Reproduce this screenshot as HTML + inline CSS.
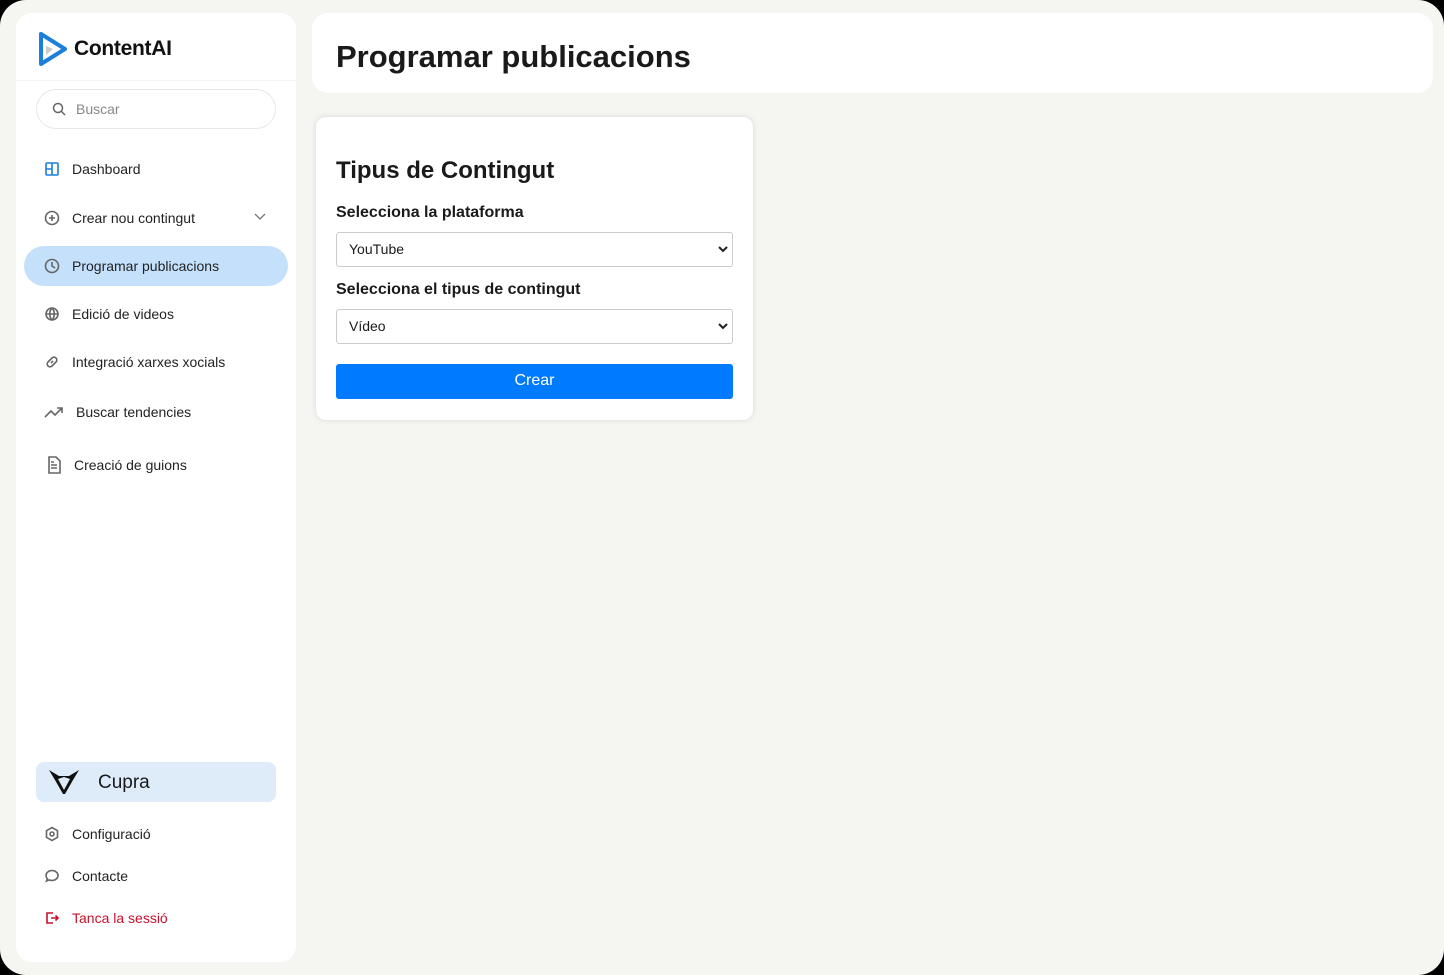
<!DOCTYPE html>
<html><head><meta charset="utf-8"><style>
*{box-sizing:border-box;margin:0;padding:0}
html,body{width:1444px;height:975px;background:#000;overflow:hidden}
body{font-family:"Liberation Sans",sans-serif;color:#1a1a1a}
.app{position:absolute;inset:0;background:#f5f5f1;border-radius:26px}
.side{position:absolute;left:16px;top:13px;width:280px;height:949px;background:#fff;border-radius:16px}
.logo{position:absolute;left:22px;top:19px;display:flex;align-items:center;gap:6px;font-size:21px;font-weight:bold;letter-spacing:-0.3px;color:#111}
.sep{position:absolute;left:0;right:0;top:67px;border-top:1px solid #f3f3f3}
.search{position:absolute;left:20px;top:76px;width:240px;height:40px;border:1px solid #e8e8e8;border-radius:20px;font-size:14px;color:#888;padding:11px 0 0 39px}
.search svg{position:absolute;left:15px;top:12px}
.item{position:absolute;left:28px;font-size:14px;color:#222;display:flex;align-items:center;gap:12px}
.item svg{width:16px;height:16px;fill:none;stroke:#666;stroke-width:1.6}
.act{position:absolute;left:8px;top:233px;width:264px;height:40px;background:#c4e0fb;border-radius:20px}
.cupra{position:absolute;left:20px;top:749px;width:240px;height:40px;background:#deecfa;border-radius:8px;font-size:19px;padding:10px 0 0 62px}
.head{position:absolute;left:312px;top:13px;width:1121px;height:80px;background:#fff;border-radius:16px;font-size:31px;font-weight:bold;padding:26px 0 0 24px}
.card{position:absolute;left:316px;top:117px;width:437px;height:303px;background:#fff;border-radius:10px;box-shadow:0 0 6px rgba(0,0,0,.12)}
.card h2{position:absolute;left:20px;top:40px;font-size:24px}
.lbl{position:absolute;left:20px;font-size:16px;font-weight:bold}
.sel{position:absolute;left:20px;width:397px;height:35px;border:1px solid #ccc;border-radius:3px;font-size:14px;padding:8px 0 0 12px}
.sel svg{position:absolute;right:4px;top:13px}
.btn{position:absolute;left:20px;top:247px;width:397px;height:35px;background:#007bff;border-radius:3px;color:#fff;font-size:16px;text-align:center;padding-top:8px}
</style></head><body><div class="app">
<div class="side">
<div class="logo"><svg width="30" height="34" viewBox="0 0 30 34"><path d="M3 2 L27 17 L3 32 Z" fill="none" stroke="#1c7fd9" stroke-width="4" stroke-linejoin="round"/><path d="M8 14 L15 17 L8 23Z" fill="#ccc"/></svg><span>ContentAI</span></div>
<div class="sep"></div>
<div class="search"><svg width="14" height="14" viewBox="0 0 14 14" fill="none" stroke="#666" stroke-width="1.5"><circle cx="6" cy="6" r="4.5"/><path d="M9.5 9.5L13 13"/></svg>Buscar</div>
<div class="item" style="top:148px"><svg viewBox="0 0 16 16" style="stroke:#1c7fd9"><rect x="2" y="2" width="12" height="12" rx="1"/><path d="M8 2v12M2 8h6"/></svg>Dashboard</div>
<div class="item" style="top:197px"><svg viewBox="0 0 16 16"><circle cx="8" cy="8" r="6.5"/><path d="M8 5v6M5 8h6"/></svg>Crear nou contingut</div>
<svg style="position:absolute;left:238px;top:200px" width="12" height="8" viewBox="0 0 12 8" fill="none" stroke="#777" stroke-width="1.3"><path d="M1 1l5 5 5-5"/></svg>
<div class="act"></div>
<div class="item" style="top:245px"><svg viewBox="0 0 16 16"><circle cx="8" cy="8" r="6.5"/><path d="M8 4v4l3 2"/></svg>Programar publicacions</div>
<div class="item" style="top:293px"><svg viewBox="0 0 16 16"><circle cx="8" cy="8" r="6"/><path d="M2 8h12M8 2c-3 3-3 9 0 12M8 2c3 3 3 9 0 12"/></svg>Edició de videos</div>
<div class="item" style="top:341px"><svg viewBox="0 0 16 16"><path d="M7 9l2-2M6 6l2-2a2.5 2.5 0 014 4l-2 2M10 10l-2 2a2.5 2.5 0 01-4-4l2-2"/></svg>Integració xarxes xocials</div>
<div class="item" style="top:391px"><svg viewBox="0 0 20 16" style="width:20px"><path d="M1 13l6-6 4 4 7-7M13 4h5v5"/></svg>Buscar tendencies</div>
<div class="item" style="top:443px;left:30px"><svg viewBox="0 0 16 18" style="width:16px;height:18px"><path d="M3 1h7l4 4v12H3z M5 9h6M5 12h6M5 6h3"/></svg>Creació de guions</div>
<div class="cupra"><svg style="position:absolute;left:12px;top:6px" width="32" height="28" viewBox="0 0 32 28"><path d="M1 2 L11 8 L21 8 L31 2 L25 12 L17 26 L15 26 L7 12Z M10 11 L16 22 L22 11 L16 9Z" fill="#111" fill-rule="evenodd"/></svg>Cupra</div>
<div class="item" style="top:813px"><svg viewBox="0 0 16 16"><path d="M8 1.5l5.5 3.2v6.6L8 14.5l-5.5-3.2V4.7z"/><circle cx="8" cy="8" r="2"/></svg>Configuració</div>
<div class="item" style="top:855px"><svg viewBox="0 0 16 16"><path d="M8 2.5c3.3 0 6 2.2 6 5s-2.7 5-6 5c-1 0-2-.2-2.8-.6L2.5 13l.8-2.4C2.5 9.7 2 8.6 2 7.5c0-2.8 2.7-5 6-5z"/></svg>Contacte</div>
<div class="item" style="top:897px;color:#c8102e"><svg viewBox="0 0 16 16" style="stroke:#c8102e"><path d="M9 3H3v10h6M7 8h7M11.5 5.5L14 8l-2.5 2.5"/></svg>Tanca la sessió</div>
</div>
<div class="head">Programar publicacions</div>
<div class="card">
<h2>Tipus de Contingut</h2>
<div class="lbl" style="top:87px">Selecciona la plataforma</div>
<div class="sel" style="top:115px">YouTube<svg width="10" height="7" viewBox="0 0 10 7" fill="none" stroke="#222" stroke-width="2"><path d="M1 1l4 4 4-4"/></svg></div>
<div class="lbl" style="top:164px">Selecciona el tipus de contingut</div>
<div class="sel" style="top:192px">Vídeo<svg width="10" height="7" viewBox="0 0 10 7" fill="none" stroke="#222" stroke-width="2"><path d="M1 1l4 4 4-4"/></svg></div>
<div class="btn">Crear</div>
</div>
</div></body></html>
